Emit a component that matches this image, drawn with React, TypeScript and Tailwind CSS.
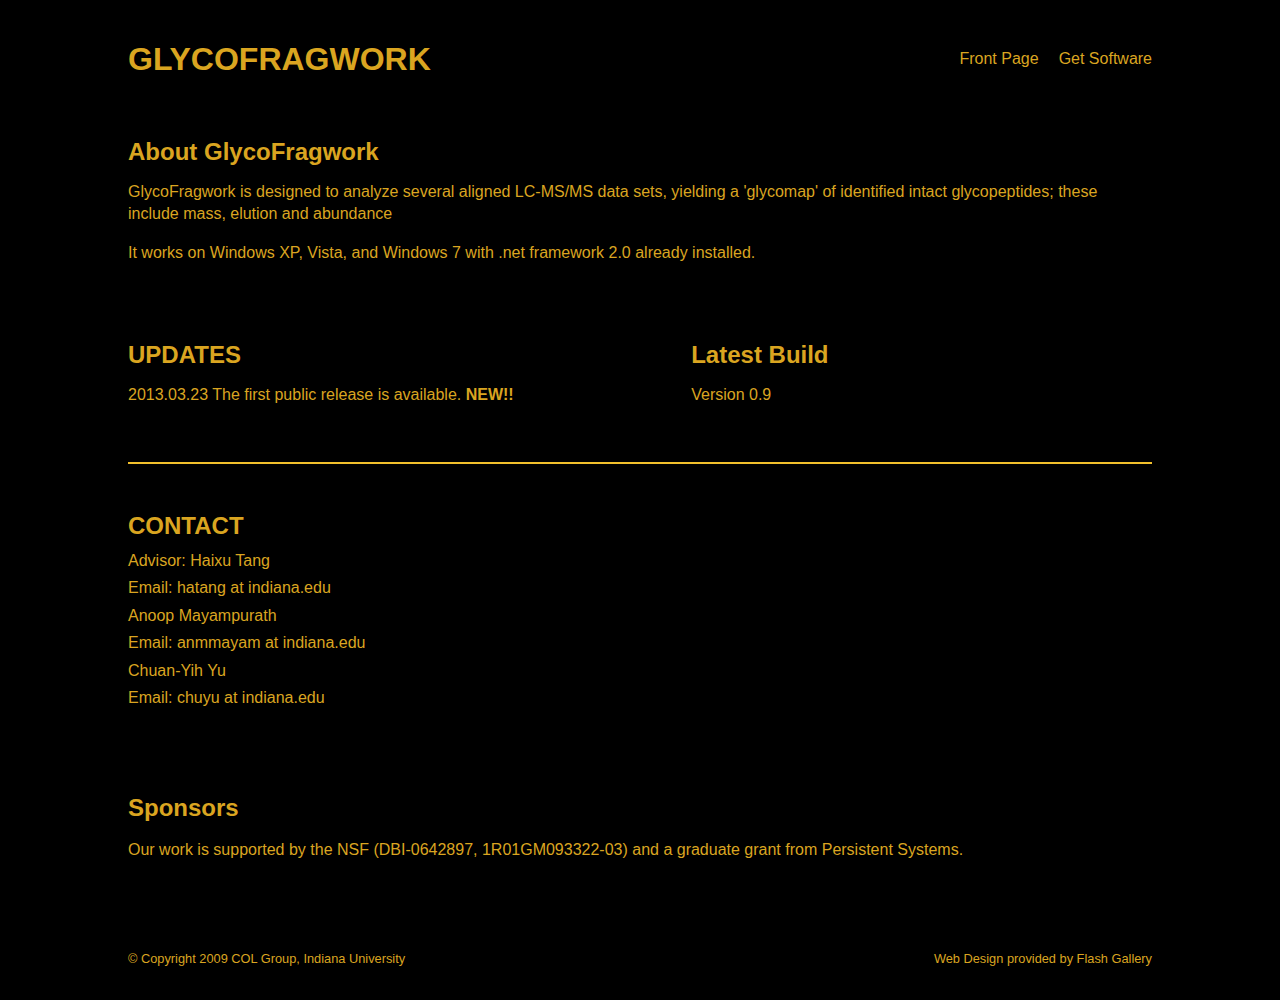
import React from 'react';

const contacts = [
  'Advisor: Haixu Tang',
  'Email: hatang at indiana.edu',
  'Anoop Mayampurath',
  'Email: anmmayam at indiana.edu',
  'Chuan-Yih Yu',
  'Email: chuyu at indiana.edu',
];

export default function App() {
  return (
    <div className="min-h-[1000px] bg-black font-['Liberation_Sans',Arial,sans-serif] text-[#daa520]">
      <div className="mx-auto w-[1024px]">
        <header className="flex items-center justify-between pt-[39px]">
          <h1 className="text-[32px] font-bold leading-[40px]">GLYCOFRAGWORK</h1>
          <nav className="flex gap-5 text-base leading-[40px]">
            <a href="#">Front Page</a>
            <a href="#">Get Software</a>
          </nav>
        </header>

        <section className="mt-[57px]">
          <h2 className="text-2xl font-bold leading-8">About GlycoFragwork</h2>
          <p className="mt-[13px] text-base leading-[22px]">
            GlycoFragwork is designed to analyze several aligned LC-MS/MS data sets, yielding a
            'glycomap' of identified intact glycopeptides; these include mass, elution and abundance
          </p>
          <p className="mt-[17px] text-base leading-[22px]">
            It works on Windows XP, Vista, and Windows 7 with .net framework 2.0 already installed.
          </p>
        </section>

        <section className="mt-[75px] flex">
          <div className="w-[55%]">
            <h2 className="text-2xl font-bold leading-8">UPDATES</h2>
            <p className="mt-[13px] text-base leading-[22px]">
              2013.03.23 The first public release is available. <b>NEW!!</b>
            </p>
          </div>
          <div className="flex-1">
            <h2 className="text-2xl font-bold leading-8">Latest Build</h2>
            <p className="mt-[13px] text-base leading-[22px]">Version 0.9</p>
          </div>
        </section>

        <hr className="mt-[56px] border-0 border-t-2 border-[#f2c02c]" />

        <section className="mt-[46px]">
          <h2 className="text-2xl font-bold leading-8">CONTACT</h2>
          <div className="mt-[5px] flex flex-col text-base leading-[27.4px]">
            {contacts.map((c) => (
              <p key={c}>{c}</p>
            ))}
          </div>
        </section>

        <section className="mt-[81px]">
          <h2 className="text-2xl font-bold leading-8">Sponsors</h2>
          <p className="mt-[15px] text-base leading-[22px]">
            Our work is supported by the NSF (DBI-0642897, 1R01GM093322-03) and a graduate grant from
            Persistent Systems.
          </p>
        </section>

        <footer className="mt-[90px] flex justify-between pb-[32px] text-[12.8px] leading-4">
          <span>© Copyright 2009 COL Group, Indiana University</span>
          <span>Web Design provided by Flash Gallery</span>
        </footer>
      </div>
    </div>
  );
}
